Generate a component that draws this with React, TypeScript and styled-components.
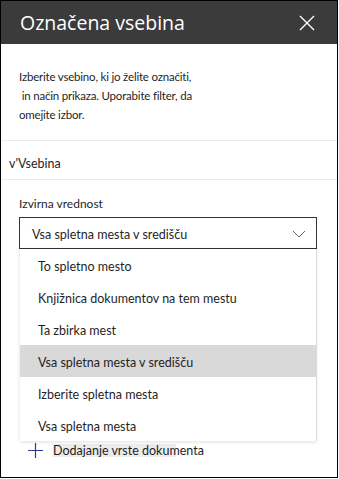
import styled, { createGlobalStyle } from "styled-components";

const GlobalStyle = createGlobalStyle`
  html, body { margin: 0; padding: 0; background: #fff; }
  body { font-family: Lato, "Open Sans", Arial, sans-serif; color: #1f1f1f; }
  * { box-sizing: border-box; }
`;

const options = [
  "To spletno mesto",
  "Knjižnica dokumentov na tem mestu",
  "Ta zbirka mest",
  "Vsa spletna mesta v središču",
  "Izberite spletna mesta",
  "Vsa spletna mesta",
];
const selected = "Vsa spletna mesta v središču";

const Frame = styled.div`
  position: relative;
  width: 338px;
  height: 478px;
  border: 1px solid #000;
  background: #fff;
  overflow: hidden;
`;

const Header = styled.header`
  height: 43px;
  background: #3b3b3b;
  display: flex;
  align-items: center;
  justify-content: space-between;
  padding: 0 22px 0 19px;
`;

const Title = styled.h1`
  margin: 0;
  font-family: "Open Sans", Arial, sans-serif;
  font-size: 19.5px;
  font-weight: 400;
  color: #fff;
  padding-bottom: 1px;
`;

const CloseButton = styled.button`
  width: 16px;
  height: 16px;
  padding: 0;
  border: 0;
  background: none;
  display: flex;
  cursor: pointer;
`;

const Description = styled.p`
  margin: 0;
  padding: 23px 18px 16px;
  font-size: 11.5px;
  letter-spacing: -0.2px;
  line-height: 19px;
`;

const Divider = styled.hr`
  margin: 0;
  border: 0;
  border-top: 1px solid #eaeaea;
`;

const SectionTitle = styled.div`
  height: 38px;
  padding: 14px 0 0 8px;
  font-size: 12.5px;
  line-height: 18px;
`;

const Field = styled.div`
  position: relative;
  padding: 15px 20px 0 18px;
`;

const Label = styled.label`
  display: block;
  font-size: 12px;
  line-height: 18px;
  margin-bottom: 4px;
`;

const Select = styled.div`
  height: 32px;
  border: 1px solid #333;
  display: flex;
  align-items: center;
  justify-content: space-between;
  padding: 2px 10px 0 12px;
  font-size: 12.5px;
`;

const Menu = styled.ul`
  position: absolute;
  left: 19px;
  right: 21px;
  top: 100%;
  margin: 0;
  padding: 0;
  list-style: none;
  background: #fff;
  box-shadow: 0 1px 4px rgba(0, 0, 0, 0.13), 1px 0 0 #e6e6e6;
  z-index: 2;
`;

const Option = styled.li<{ $active?: boolean }>`
  height: 32px;
  display: flex;
  align-items: center;
  padding: 2px 0 0 18px;
  font-size: 12.5px;
  background: ${({ $active }) => ($active ? "#d9d9d9" : "#fff")};
`;

const AddRow = styled.div`
  display: flex;
  align-items: center;
  gap: 10px;
  padding: 0 0 0 27px;
  margin-top: 194px;
`;

const AddButton = styled.span`
  width: 123px;
  height: 13px;
  background: #ececec;
  white-space: nowrap;
  font-size: 12.5px;
  line-height: 13px;
`;

export default function App() {
  return (
    <>
      <GlobalStyle />
      <Frame>
        <Header>
          <Title>Označena vsebina</Title>
          <CloseButton aria-label="Zapri">
            <svg width="16" height="16" viewBox="0 0 16 16">
              <path d="M1 1 L15 15 M15 1 L1 15" stroke="#fff" strokeWidth="1.4" fill="none" />
            </svg>
          </CloseButton>
        </Header>
        <Description>
          Izberite vsebino, ki jo želite označiti,
          <br />
          &nbsp;in način prikaza. Uporabite filter, da
          <br />
          omejite izbor.
        </Description>
        <Divider />
        <SectionTitle>v'Vsebina</SectionTitle>
        <Divider />
        <Field>
          <Label>Izvirna vrednost</Label>
          <Select>
            <span>{selected}</span>
            <svg width="14" height="8" viewBox="0 0 14 8">
              <path d="M1 1 L7 7 L13 1" stroke="#666" strokeWidth="1" fill="none" />
            </svg>
          </Select>
          <Menu>
            {options.map((o) => (
              <Option key={o} $active={o === selected}>
                {o}
              </Option>
            ))}
          </Menu>
        </Field>
        <AddRow>
          <svg width="15" height="15" viewBox="0 0 15 15">
            <path d="M0 7.5 H15 M7.5 0 V15" stroke="#2b3a8c" strokeWidth="1.2" fill="none" />
          </svg>
          <AddButton>Dodajanje vrste dokumenta</AddButton>
        </AddRow>
      </Frame>
    </>
  );
}
